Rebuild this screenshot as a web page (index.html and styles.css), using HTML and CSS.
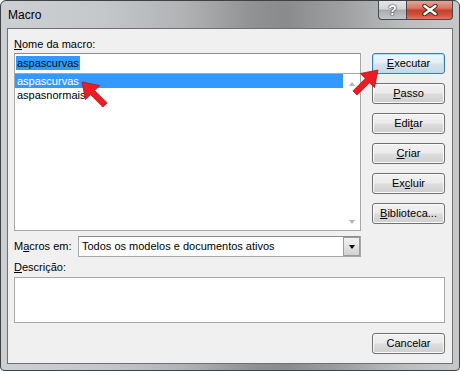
FILE: index.html
```html
<!DOCTYPE html>
<html lang="pt">
<head>
<meta charset="utf-8">
<title>Macro</title>
<link rel="stylesheet" href="styles.css">
</head>
<body>
<div class="window">
  <div class="titlebar">
    <span class="title">Macro</span>
    <div class="caption-btns">
      <div class="cbtn help">?</div>
      <div class="cbtn close">
        <svg width="16" height="12" viewBox="0 0 16 12">
          <path d="M2.5 2 L13.5 10 M13.5 2 L2.5 10" stroke="#3a2a28" stroke-width="4.4" stroke-linecap="round"/>
          <path d="M2.5 2 L13.5 10 M13.5 2 L2.5 10" stroke="#ffffff" stroke-width="2.4" stroke-linecap="round"/>
        </svg>
      </div>
    </div>
  </div>
  <div class="client">
    <div class="top">
      <div class="left">
        <div class="label"><u>N</u>ome da macro:</div>
        <div class="textbox"><span class="sel">aspascurvas</span></div>
        <div class="listbox">
          <div class="items">
            <div class="item selected">aspascurvas</div>
            <div class="item">aspasnormais</div>
          </div>
          <div class="vscroll"><span class="arr up"></span><span class="arr down"></span></div>
        </div>
      </div>
      <div class="buttons">
        <div class="btn default"><u>E</u>xecutar</div>
        <div class="btn"><u>P</u>asso</div>
        <div class="btn">Edi<u>t</u>ar</div>
        <div class="btn"><u>C</u>riar</div>
        <div class="btn">Ex<u>c</u>luir</div>
        <div class="btn"><u>B</u>iblioteca...</div>
      </div>
    </div>
    <div class="macros-row">
      <div class="label macros-label">M<u>a</u>cros em:</div>
      <div class="combo">
        <span class="combo-text">Todos os modelos e documentos ativos</span>
        <div class="drop"><span class="tri"></span></div>
      </div>
    </div>
    <div class="label desc-label"><u>D</u>escrição:</div>
    <div class="textarea"></div>
    <div class="bottom"><div class="btn">Cancelar</div></div>
  </div>
  <svg class="arrow a1" width="28" height="28" viewBox="0 0 28 28">
    <polygon points="1,1 18.7,4.5 13.7,9.5 26.1,21.9 21.9,26.1 9.5,13.7 4.5,18.7" fill="#ec1c24" stroke="#b3141a" stroke-width="0.8" stroke-linejoin="round"/>
  </svg>
  <svg class="arrow a2" width="28" height="28" viewBox="0 0 28 28">
    <polygon points="27,1 9.3,4.5 14.3,9.5 1.9,21.9 6.1,26.1 18.5,13.7 23.5,18.7" fill="#ec1c24" stroke="#b3141a" stroke-width="0.8" stroke-linejoin="round"/>
  </svg>
</div>
</body>
</html>
```
FILE: styles.css
```css
* { box-sizing: border-box; }
html, body { margin: 0; padding: 0; background: #ffffff; }
body {
  font-family: "Liberation Sans", Arial, sans-serif;
  font-size: 11px;
  color: #000;
}
.window {
  position: relative;
  width: 460px;
  height: 371px;
  border: 1px solid #3f4244;
  border-radius: 6px 6px 4px 4px;
  background: linear-gradient(90deg, #cdd0d3 0%, #c5c8cb 22%, #b0b2b4 40%, #909193 55%, #8a8b8c 62%, #9fa0a1 75%, #bcbdbe 88%, #c6c7c8 100%);
  display: flex;
  flex-direction: column;
  overflow: hidden;
}
.titlebar {
  height: 27px;
  display: flex;
  justify-content: space-between;
  align-items: flex-start;
  padding: 0 6px 0 7px;
}
.title {
  font-size: 12px;
  line-height: 14px;
  margin-top: 7px;
  color: #000;
}
.caption-btns {
  display: flex;
  margin-top: -1px;
}
.cbtn {
  height: 20px;
  border: 1px solid #45484b;
  border-top: none;
  display: flex;
  align-items: center;
  justify-content: center;
}
.help {
  width: 28px;
  border-right: none;
  border-radius: 0 0 0 4px;
  background: linear-gradient(180deg, #e6e8ea 0%, #d3d6d9 45%, #a9adb1 55%, #c3c6c9 100%);
  color: #fff;
  font-weight: bold;
  font-size: 14px;
  line-height: 18px;
  text-shadow: 0 0 1px #333, 0 0 1px #333, 0 0 2px #555;
}
.close {
  width: 47px;
  border-radius: 0 0 4px 0;
  background: linear-gradient(180deg, #e9a99c 0%, #d87766 42%, #c5402b 55%, #d2533d 80%, #e07a61 100%);
}
.client {
  flex: 1;
  margin: 0 6px 6px 6px;
  border: 1px solid #6e7173;
  background: #f0f0f0;
  padding: 9px 7px 9px 6px;
  display: flex;
  flex-direction: column;
}
.label {
  line-height: 13px;
  height: 13px;
  white-space: nowrap;
}
.top {
  display: grid;
  grid-template-columns: 348px 73px;
  column-gap: 10px;
}
.left {
  display: flex;
  flex-direction: column;
}
.left .label { margin-bottom: 2px; }
.textbox {
  width: 347px;
  height: 21px;
  border: 1px solid #a6a8ab;
  border-top-color: #8a8c8f;
  background: #fff;
  padding: 2px 0 0 1px;
  line-height: 14px;
}
.sel {
  display: inline-block;
  background: #3399ff;
  color: #101010;
  padding: 0 1px;
  height: 14px;
}
.listbox {
  width: 347px;
  height: 158px;
  margin-top: -1px;
  border: 1px solid #a6a8ab;
  background: #fff;
  display: flex;
}
.items { flex: 1; }
.item {
  height: 14px;
  line-height: 14px;
  padding-left: 2px;
}
.item.selected {
  background: #3399ff;
  color: #fff;
}
.vscroll {
  width: 17px;
  display: flex;
  flex-direction: column;
  justify-content: space-between;
  align-items: center;
  padding: 8px 0 6px 0;
}
.arr {
  width: 0;
  height: 0;
  border-left: 3.5px solid transparent;
  border-right: 3.5px solid transparent;
}
.arr.up { border-bottom: 4px solid #b4b4b4; }
.arr.down { border-top: 4px solid #b4b4b4; }
.buttons {
  display: flex;
  flex-direction: column;
  gap: 9px;
  padding-top: 15px;
}
.btn {
  width: 73px;
  height: 21px;
  border: 1px solid #707070;
  border-radius: 3px;
  background: linear-gradient(180deg, #f2f2f2 0%, #ebebeb 48%, #dddddd 52%, #cfcfcf 100%);
  box-shadow: inset 0 0 0 1px #fbfbfb;
  display: flex;
  align-items: center;
  justify-content: center;
  line-height: 13px;
  white-space: nowrap;
}
.btn.default {
  border-color: #3c7fb1;
  box-shadow: inset 0 0 0 1px #a9e2fa;
  background: linear-gradient(180deg, #eef6fb 0%, #e4eef5 48%, #d5e3ec 52%, #c8d8e3 100%);
}
.macros-row {
  margin-top: 5px;
  display: flex;
  align-items: center;
  height: 21px;
}
.macros-label { width: 64px; }
.combo {
  width: 283px;
  height: 21px;
  border: 1px solid #a6a8ab;
  border-top-color: #8a8c8f;
  background: #fff;
  display: flex;
  align-items: stretch;
  justify-content: space-between;
}
.combo-text {
  padding-left: 3px;
  line-height: 19px;
  white-space: nowrap;
}
.drop {
  width: 17px;
  border: 1px solid #9a9a9a;
  background: linear-gradient(180deg, #f2f2f2 0%, #e2e2e2 50%, #d2d2d2 100%);
  display: flex;
  align-items: center;
  justify-content: center;
}
.tri {
  width: 0;
  height: 0;
  border-left: 3.5px solid transparent;
  border-right: 3.5px solid transparent;
  border-top: 4px solid #000;
}
.desc-label { margin-top: 4px; }
.textarea {
  margin-top: 3px;
  height: 46px;
  border: 1px solid #a6a8ab;
  background: #fff;
}
.bottom {
  margin-top: 10px;
  display: flex;
  justify-content: flex-end;
}
.arrow {
  position: absolute;
}
.a1 { left: 80px; top: 80px; }
.a2 { left: 350px; top: 68px; }
```
